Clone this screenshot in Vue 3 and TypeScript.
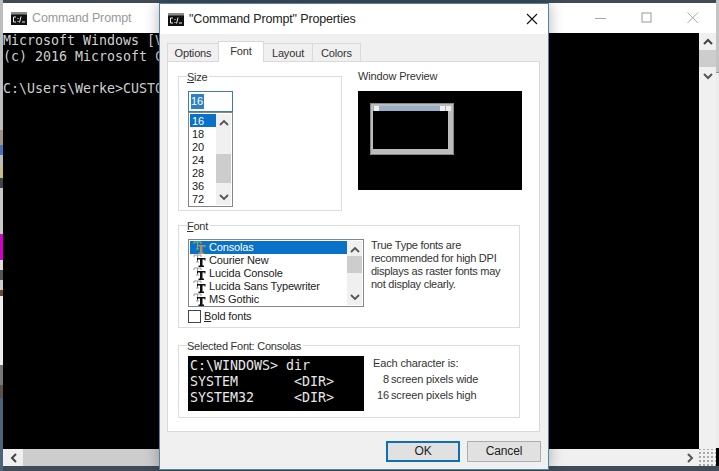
<script setup lang="ts">
const tabs = [
  { label: 'Options', active: false },
  { label: 'Font', active: true },
  { label: 'Layout', active: false },
  { label: 'Colors', active: false },
]
const sizes = ['16', '18', '20', '24', '28', '36', '72']
const fonts = ['Consolas', 'Courier New', 'Lucida Console', 'Lucida Sans Typewriter', 'MS Gothic']
</script>

<template>
  <div class="desktop">
    <section class="console">
      <header class="con-title">
        <svg class="app-icon" width="16" height="13" viewBox="0 0 16 13">
          <rect width="16" height="13" fill="#111" />
          <rect y="0" width="16" height="2.5" fill="#8a8a8a" />
          <path d="M5 5H2.500V10H5M7 6V7M7 9V10M10 4.500L8.500 10.500M11 10H14" stroke="#eee" stroke-width="1" fill="none" />
        </svg>
        <span class="con-name">Command Prompt</span>
        <div class="caption">
          <svg width="16" height="16" viewBox="0 0 16 16"><path d="M2 8.500H13" stroke="#a8a8a8" /></svg>
          <svg width="16" height="16" viewBox="0 0 16 16"><rect x="3" y="3" width="9" height="9" fill="none" stroke="#999" /></svg>
          <svg width="16" height="16" viewBox="0 0 16 16"><path d="M2.500 2.500L13 13M13 2.500L2.500 13" stroke="#aaa" /></svg>
        </div>
      </header>
      <div class="con-middle">
        <pre class="con-text">Microsoft Windows [V
(c) 2016 Microsoft C

C:\Users\Werke>CUSTO</pre>
        <div class="vbar wide">
          <svg class="chev" width="12" height="8" viewBox="0 0 12 8"><path d="M2 6L6 2L10 6" fill="none" stroke="#444" stroke-width="2" /></svg>
          <div class="thumb" />
          <svg class="chev bottom" width="12" height="8" viewBox="0 0 12 8"><path d="M2 2L6 6L10 2" fill="none" stroke="#555" stroke-width="2" /></svg>
        </div>
      </div>
      <div class="hbar">
        <svg class="harrow" width="8" height="12" viewBox="0 0 8 12"><path d="M6 2L2 6L6 10" fill="none" stroke="#444" stroke-width="2" /></svg>
        <div class="hthumb" />
        <svg class="harrow" width="8" height="12" viewBox="0 0 8 12"><path d="M2 2L6 6L2 10" fill="none" stroke="#555" stroke-width="2" /></svg>
        <div class="grip" />
      </div>
    </section>

    <section class="dialog">
      <header class="dlg-title">
        <svg class="app-icon" width="16" height="13" viewBox="0 0 16 13">
          <rect width="16" height="13" fill="#111" />
          <rect y="0" width="16" height="2.5" fill="#8a8a8a" />
          <path d="M5 5H2.500V10H5M7 6V7M7 9V10M10 4.500L8.500 10.500M11 10H14" stroke="#eee" stroke-width="1" fill="none" />
        </svg>
        <span class="dlg-name">"Command Prompt" Properties</span>
        <svg class="dlg-close" width="12" height="12" viewBox="0 0 12 12"><path d="M1 1L11 11M11 1L1 11" stroke="#111" stroke-width="1.1" /></svg>
      </header>
      <div class="dlg-body">
        <nav class="tabs">
          <span v-for="t in tabs" :key="t.label" class="tab" :class="{ active: t.active }">{{ t.label }}</span>
        </nav>
        <div class="panel">
          <div class="top-row">
            <div class="group size-group">
              <span class="legend"><u>S</u>ize</span>
              <div class="size-input"><span class="sel">16</span></div>
              <div class="size-list">
                <div class="rows">
                  <div v-for="(s, i) in sizes" :key="s" class="size-row" :class="{ on: i === 0 }">{{ s }}</div>
                </div>
                <div class="vbar narrow">
                  <svg class="chev" width="12" height="8" viewBox="0 0 12 8"><path d="M2 6L6 2L10 6" fill="none" stroke="#555" stroke-width="1.8" /></svg>
                  <div class="thumb size-thumb" />
                  <svg class="chev bottom" width="12" height="8" viewBox="0 0 12 8"><path d="M2 2L6 6L10 2" fill="none" stroke="#555" stroke-width="1.8" /></svg>
                </div>
              </div>
            </div>
            <div class="preview-col">
              <div class="preview-label">Window Preview</div>
              <div class="preview">
                <div class="mini">
                  <div class="mini-bar"><i /><b /><i /><i /></div>
                  <div class="mini-body" />
                  <div class="mini-foot" />
                </div>
              </div>
            </div>
          </div>

          <div class="group font-group">
            <span class="legend"><u>F</u>ont</span>
            <div class="font-main">
              <div class="font-left">
                <div class="font-list">
                  <div class="rows">
                    <div v-for="(f, i) in fonts" :key="f" class="font-row" :class="{ on: i === 0 }">
                      <svg class="tt" width="14" height="13" viewBox="0 0 14 13">
                        <path d="M1 1H8V3M4.500 1V8M3 8H6M1 3V1" fill="none" :stroke="i === 0 ? '#6fbf7f' : '#9a9a9a'" stroke-width="1" />
                        <path d="M4 4H12.500V6.500H11.500V5.500H9.500V11.500H11V13H5.500V11.500H7V5.500H5V6.500H4Z" :fill="i === 0 ? '#b98c5a' : '#111'" />
                      </svg>
                      <span>{{ f }}</span>
                    </div>
                  </div>
                  <div class="vbar narrow">
                    <svg class="chev" width="12" height="8" viewBox="0 0 12 8"><path d="M2 6L6 2L10 6" fill="none" stroke="#555" stroke-width="1.8" /></svg>
                    <div class="thumb font-thumb" />
                    <svg class="chev bottom" width="12" height="8" viewBox="0 0 12 8"><path d="M2 2L6 6L10 2" fill="none" stroke="#555" stroke-width="1.8" /></svg>
                  </div>
                </div>
                <label class="bold-row"><span class="check" /><span><u>B</u>old fonts</span></label>
              </div>
              <p class="hint">True Type fonts are<br />recommended for high DPI<br />displays as raster fonts may<br />not display clearly.</p>
            </div>
          </div>

          <div class="group selected-group">
            <span class="legend">Selected Font: Consolas</span>
            <div class="selected-main">
              <pre class="sample">C:\WINDOWS&gt; dir
SYSTEM       &lt;DIR&gt;
SYSTEM32     &lt;DIR&gt;</pre>
              <div class="metrics">
                <div class="m-head">Each character is:</div>
                <div class="m-grid">
                  <span class="num">8</span><span>screen pixels wide</span>
                  <span class="num">16</span><span>screen pixels high</span>
                </div>
              </div>
            </div>
          </div>
        </div>
        <footer class="buttons">
          <span class="btn primary">OK</span>
          <span class="btn">Cancel</span>
        </footer>
      </div>
    </section>
  </div>
</template>

<style>
html, body { margin: 0; padding: 0; overflow: hidden; }
</style>

<style scoped>
.desktop {
  position: relative;
  width: 719px;
  height: 471px;
  overflow: hidden;
  font-family: "Liberation Sans", Arial, sans-serif;
  font-size: 11px;
  letter-spacing: -0.15px;
  color: #222;
  background:
    linear-gradient(to bottom, #c4c4c4 0 72px, #8f8f8f 72px 73px, #ececec 73px 448px, #000 448px 466px, #3f4c57 466px) right top / 3px 100% no-repeat,
    linear-gradient(to bottom, #bdbdbd 0 130px, #a39383 130px 145px, #4a72b8 145px 155px, #bdbdbd 155px 165px, #c9bd8a 165px 178px, #444 178px 188px, #c8c8c8 188px 234px, #d400c8 234px 260px, #ddd 260px 270px, #555 270px 280px, #ccc 280px 290px, #6b4a35 290px 296px, #eee 296px 365px, #777 365px 385px, #5b5149 385px 398px, #4b6478 398px) left top / 3px 100% no-repeat,
    #3f4c57;
}
.console {
  position: absolute;
  left: 3px;
  top: 3px;
  width: 713px;
  height: 463px;
  display: flex;
  flex-direction: column;
  background: #fff;
}
.con-title {
  height: 30px;
  flex: none;
  display: flex;
  align-items: center;
  padding-left: 8px;
}
.con-name {
  margin-left: 5px;
  color: #9a9a9a;
  font-size: 12.5px;
}
.caption {
  margin-left: auto;
  display: flex;
  gap: 30px;
  padding-right: 15px;
}
.con-middle {
  flex: 1;
  display: flex;
  min-height: 0;
}
.con-text {
  flex: 1;
  margin: 0;
  background: #000;
  color: #cfcfcf;
  font-family: "DejaVu Sans Mono", "Liberation Mono", monospace;
  font-size: 13.3px;
  line-height: 16px;
  letter-spacing: 0;
}
.vbar {
  flex: none;
  display: flex;
  flex-direction: column;
  align-items: center;
  background: #f0f0f0;
}
.vbar.wide { width: 17px; }
.vbar.wide .chev { margin-top: 5px; flex: none; }
.vbar.wide .thumb { margin-top: 4px; height: 17px; width: 100%; background: #cdcdcd; }
.bottom { margin-top: auto; margin-bottom: 5px; }
.hbar {
  height: 17px;
  flex: none;
  display: flex;
  align-items: center;
  background: #f0f0f0;
}
.harrow { flex: none; margin: 0 5px 0 7px; }
.hthumb { align-self: stretch; flex: 1; background: linear-gradient(to right, #cdcdcd 0 500px, #f0f0f0 500px); }
.grip {
  width: 17px;
  align-self: stretch;
  flex: none;
  background: radial-gradient(circle, #aaa 0.8px, transparent 1px) 3px 2px / 4px 4px;
}
.dialog {
  position: absolute;
  left: 159px;
  top: 3px;
  width: 390px;
  height: 467px;
  box-sizing: border-box;
  border: 1px solid #4f85ab;
  display: flex;
  flex-direction: column;
  background: #f0f0f0;
  box-shadow: 0 0 14px rgba(0, 0, 0, 0.3);
}
.dlg-title {
  height: 30px;
  flex: none;
  background: #fff;
  display: flex;
  align-items: center;
  padding-left: 8px;
}
.dlg-name { margin-left: 5px; font-size: 12.5px; color: #222; }
.dlg-close { margin-left: auto; margin-right: 10px; }
.dlg-body {
  flex: 1;
  display: flex;
  flex-direction: column;
  padding: 0 8px 0 7px;
  min-height: 0;
}
.tabs {
  display: flex;
  align-items: flex-end;
  height: 27px;
  padding-left: 1px;
  position: relative;
  z-index: 1;
}
.tab {
  height: 17px;
  line-height: 19px;
  box-sizing: content-box;
  text-align: center;
  border: 1px solid #d9d9d9;
  border-bottom: 0;
  margin-left: -1px;
  background: #f0f0f0;
  width: 50px;
  color: #333;
}
.tab:nth-child(2) {
  width: 44px;
  height: 20px;
  line-height: 18px;
  background: #fff;
  margin-bottom: -1px;
}
.tab:nth-child(3) { width: 48px; }
.tab:nth-child(4) { width: 47px; }
.panel {
  box-sizing: border-box;
  width: 373px;
  height: 371px;
  background: #fff;
  border: 1px solid #d9d9d9;
  padding: 14px 0 0 10px;
  display: flex;
  flex-direction: column;
}
.top-row {
  display: flex;
  gap: 16px;
}
.group {
  position: relative;
  box-sizing: border-box;
  border: 1px solid #dcdcdc;
}
.legend {
  position: absolute;
  left: 8px;
  top: -7px;
  padding: 0 2px 0 0;
  background: #fff;
  line-height: 15px;
  letter-spacing: -0.25px;
  color: #333;
}
.size-group {
  width: 164px;
  height: 135px;
  padding: 14px 0 0 9px;
}
.size-input {
  box-sizing: border-box;
  width: 45px;
  height: 21px;
  border: 1px solid #3f7f99;
  padding: 2px 0 0 2px;
  line-height: 15px;
}
.sel { background: #2f7fc4; color: #fff; display: inline-block; width: 13px; }
.size-list {
  box-sizing: border-box;
  width: 45px;
  height: 95px;
  border: 1px solid #82878f;
  display: flex;
  padding: 1px;
}
.rows { flex: 1; min-width: 0; }
.size-row {
  height: 13px;
  line-height: 15px;
  padding-left: 2px;
}
.on { background: #0a71c8; color: #fff; }
.narrow { width: 15px; }
.narrow .chev { margin-top: 5px; flex: none; }
.narrow .bottom { margin-top: auto; margin-bottom: 4px; }
.size-thumb { margin-top: 27px; width: 100%; height: 29px; background: #cdcdcd; }
.font-thumb { margin-top: 2px; width: 100%; height: 17px; background: #cdcdcd; }
.preview-col { width: 164px; margin-top: -7px; }
.preview-label { line-height: 15px; color: #333; margin-bottom: 7px; }
.preview {
  height: 87px;
  background: #000;
  padding: 12px 0 0 12px;
}
.mini {
  box-sizing: border-box;
  width: 84px;
  height: 52px;
  border: 1px solid #888;
  background: #bcbcbc;
  padding: 2px;
  display: flex;
  flex-direction: column;
}
.mini-bar { display: flex; height: 5px; flex: none; background: #98afc9; }
.mini-bar i { width: 5px; background: #eee; margin-left: 1px; flex: none; }
.mini-bar b { flex: 1; }
.mini-body { flex: 1; background: #000; margin-right: 3px; }
.mini-foot { height: 3px; flex: none; }
.font-group {
  margin-top: 14px;
  width: 342px;
  height: 103px;
  padding: 13px 0 0 9px;
}
.font-main { display: flex; }
.font-left { width: 176px; flex: none; }
.font-list {
  box-sizing: border-box;
  width: 176px;
  height: 68px;
  border: 1px solid #82878f;
  padding: 1px;
  display: flex;
}
.font-row {
  height: 13px;
  display: flex;
  align-items: center;
  line-height: 15px;
  white-space: nowrap;
}
.tt { flex: none; margin: 0 2px 0 3px; overflow: visible; }
.bold-row {
  display: flex;
  align-items: center;
  gap: 3px;
  margin-top: 2px;
  line-height: 14px;
}
.check {
  box-sizing: border-box;
  width: 13px;
  height: 13px;
  border: 1px solid #444;
  background: #fff;
}
.hint {
  margin: 0 0 0 7px;
  line-height: 13px;
  color: #333;
  white-space: nowrap;
  letter-spacing: -0.25px;
}
.selected-group {
  margin-top: 17px;
  width: 342px;
  height: 73px;
  padding: 10px 0 0 9px;
}
.selected-main { display: flex; }
.sample {
  margin: 0;
  box-sizing: border-box;
  width: 176px;
  height: 55px;
  background: #000;
  color: #e8e8e8;
  padding: 2px 0 0 2px;
  font-family: "DejaVu Sans Mono", "Liberation Mono", monospace;
  font-size: 13.3px;
  line-height: 16px;
  letter-spacing: 0;
}
.metrics { margin: -1px 0 0 9px; line-height: 16px; color: #333; }
.m-grid {
  display: grid;
  grid-template-columns: 13px auto;
  column-gap: 2px;
  margin-left: 3px;
}
.num { text-align: right; }
.buttons {
  display: flex;
  justify-content: flex-end;
  gap: 7px;
  margin: 9px -1px 0 0;
}
.btn {
  box-sizing: border-box;
  width: 74px;
  height: 21px;
  border: 1px solid #adadad;
  background: #e1e1e1;
  text-align: center;
  line-height: 19px;
  font-size: 12px;
}
.btn.primary { border: 2px solid #0f6fb0; line-height: 17px; }
</style>
